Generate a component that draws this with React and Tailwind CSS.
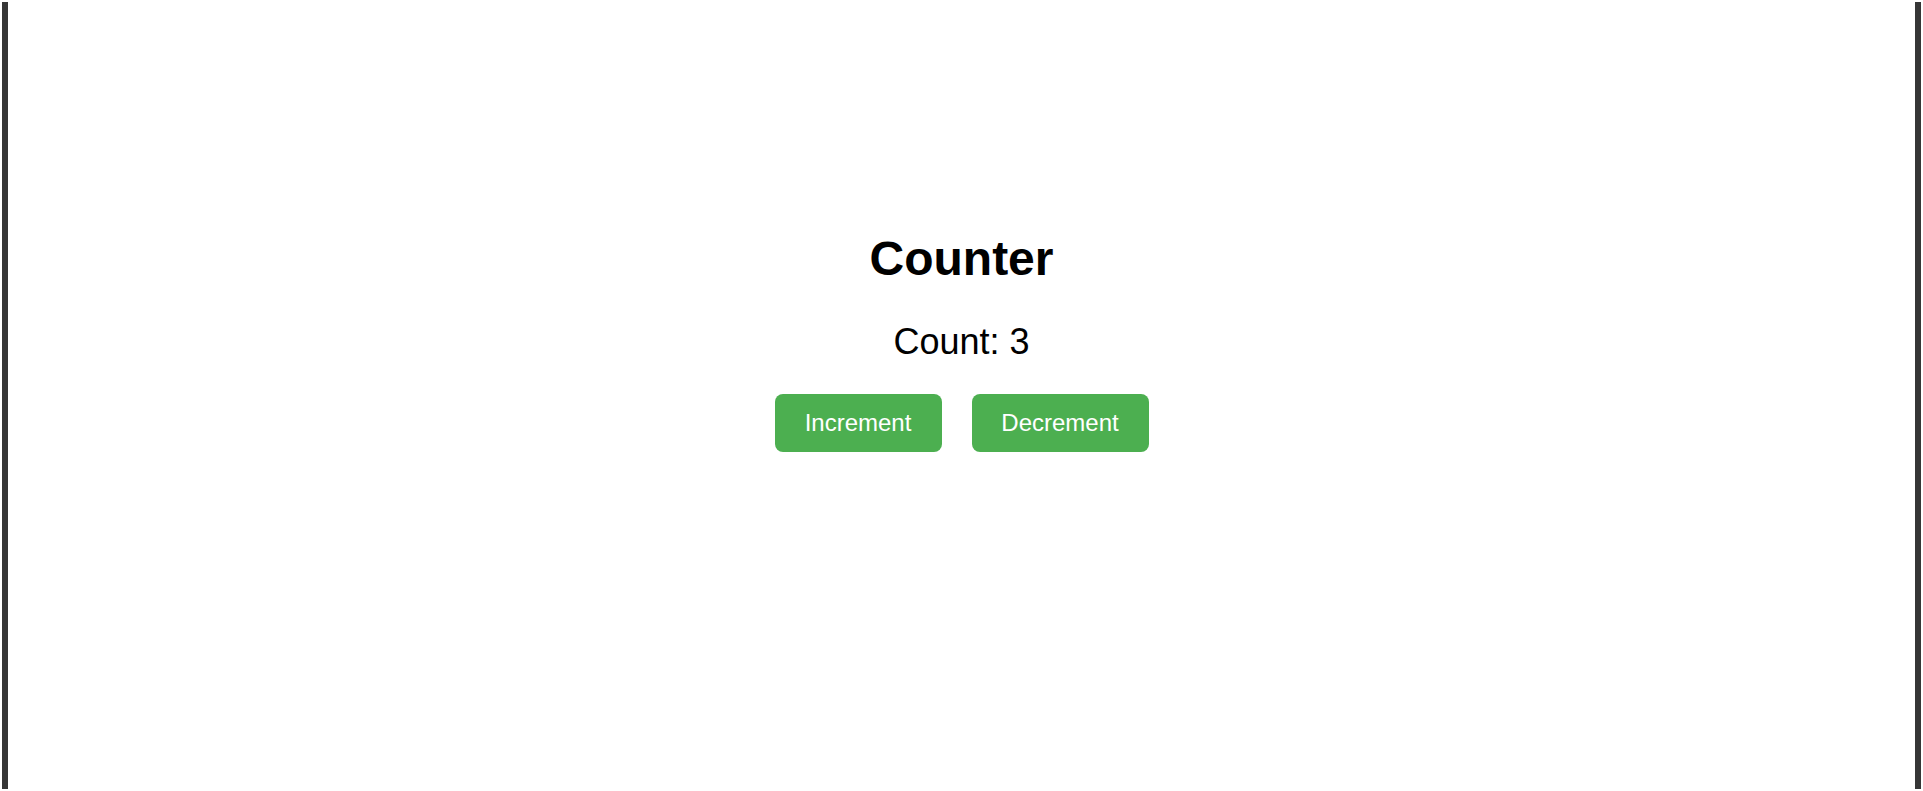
export default function App() {
  return (
    <div className="h-screen bg-white p-[2px]">
      <div
        className="flex h-full flex-col items-center border-x-[6px] border-[#363636] pt-[229px] text-black"
        style={{ fontFamily: '"Liberation Sans", Arial, sans-serif' }}
      >
        <h1 className="text-[48px] font-bold leading-[55px]">Counter</h1>

        <p className="mt-[35px] text-[36px] leading-[41px]">Count: 3</p>

        <div className="mt-[32px] flex gap-[30px]">
          <button className="h-[58px] w-[167px] rounded-[8px] bg-[#4CAF50] text-[24px] text-white">
            Increment
          </button>
          <button className="h-[58px] w-[177px] rounded-[8px] bg-[#4CAF50] text-[24px] text-white">
            Decrement
          </button>
        </div>
      </div>
    </div>
  );
}
